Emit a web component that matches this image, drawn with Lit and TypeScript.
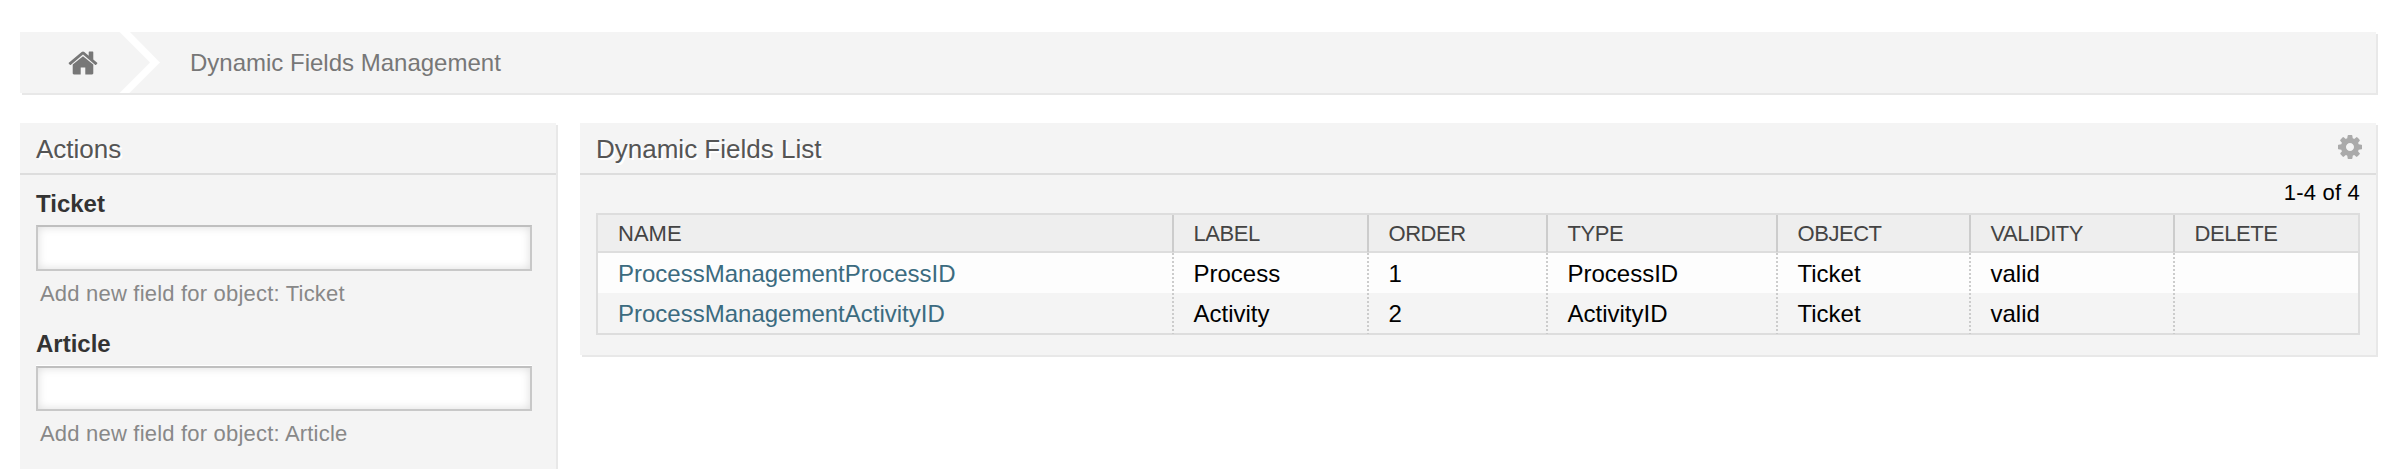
import { LitElement, html, css } from "lit";
import { customElement, property } from "lit/decorators.js";

interface FieldRow {
  name: string;
  label: string;
  order: number;
  type: string;
  object: string;
  validity: string;
}

const COLUMNS = ["Name", "Label", "Order", "Type", "Object", "Validity", "Delete"];

const ROWS: FieldRow[] = [
  { name: "ProcessManagementProcessID", label: "Process", order: 1, type: "ProcessID", object: "Ticket", validity: "valid" },
  { name: "ProcessManagementActivityID", label: "Activity", order: 2, type: "ActivityID", object: "Ticket", validity: "valid" },
];

@customElement("bread-crumb")
class BreadCrumb extends LitElement {
  @property() label = "";

  static styles = css`
    :host {
      display: flex;
      height: 61px;
      background: #f4f4f4;
      box-shadow: 2px 2px 0 #e8e8e8;
    }
    .home {
      box-sizing: border-box;
      width: 99px;
      padding: 15px 0 0 47px;
    }
    .icon {
      display: block;
      width: 32px;
      height: 32px;
      fill: #777;
    }
    .chevron {
      display: block;
      width: 42px;
      height: 61px;
      fill: #fff;
    }
    .label {
      padding-left: 29px;
      font-size: 24px;
      line-height: 61px;
      color: #777;
    }
  `;

  render() {
    return html`
      <div class="home">
        <svg class="icon" viewBox="0 0 1792 1792">
          <path d="M1472 992v480q0 26-19 45t-45 19h-384v-384h-256v384h-384q-26 0-45-19t-19-45v-480q0-1 .5-3t.5-3l575-474 575 474q1 2 1 6zm223-69l-62 74q-8 9-21 11h-3q-13 0-21-7l-692-577-692 577q-12 8-24 7-13-2-21-11l-62-74q-8-10-7-23.500t11-21.500l719-599q32-26 76-26t76 26l244 204v-195q0-14 9-23t23-9h192q14 0 23 9t9 23v408l219 182q10 8 11 21.500t-7 23.500z"/>
        </svg>
      </div>
      <svg class="chevron" viewBox="0 0 42 61">
        <path d="M.5 0h10.500l30 30.500-30.500 30.500H.5l30.500-30.500z"/>
      </svg>
      <div class="label">${this.label}</div>
    `;
  }
}

@customElement("widget-box")
class WidgetBox extends LitElement {
  @property() heading = "";

  static styles = css`
    :host {
      display: block;
      background: #f4f4f4;
      box-shadow: 2px 2px 0 #e8e8e8;
    }
    .header {
      box-sizing: border-box;
      display: flex;
      justify-content: space-between;
      height: 52px;
      padding: 0 12px 0 16px;
      border-bottom: 2px solid #ddd;
    }
    .title {
      margin: 0;
      font-size: 26px;
      font-weight: normal;
      line-height: 52px;
      color: #555;
      text-shadow: 2px 2px 0 #fff;
    }
  `;

  render() {
    return html`
      <div class="header">
        <h2 class="title">${this.heading}</h2>
        <slot name="tool"></slot>
      </div>
      <slot></slot>
    `;
  }
}

@customElement("app-root")
class AppRoot extends LitElement {
  static styles = css`
    :host {
      box-sizing: border-box;
      display: block;
      height: 469px;
      padding: 32px 24px 0 20px;
      overflow: hidden;
      background: #fff;
      font-family: "Liberation Sans", Arial, Helvetica, sans-serif;
      color: #000;
    }
    .columns {
      display: grid;
      grid-template-columns: 536px 1fr;
      gap: 24px;
      align-items: start;
      margin-top: 30px;
    }
    .actions {
      height: 380px;
    }
    .field {
      height: 140px;
      padding: 0 24px 0 16px;
    }
    .caption {
      display: block;
      padding-top: 15px;
      font-size: 24px;
      font-weight: bold;
      line-height: 28px;
      color: #333;
    }
    .input {
      box-sizing: border-box;
      display: block;
      width: 496px;
      height: 46px;
      margin: 7px 0 0;
      padding: 0 8px;
      border: 2px solid #c8c8c8;
      border-top-color: #bfbfbf;
      border-radius: 0;
      outline: none;
      background: #fff;
      box-shadow: inset 0 0 10px #ddd;
      font: inherit;
    }
    .field + .field .input {
      height: 45px;
      margin-top: 8px;
      box-shadow: inset 0 0 10px #ddd, 0 -1px 0 #fff;
    }
    .hint {
      padding: 10px 0 0 4px;
      font-size: 22px;
      letter-spacing: 0.2px;
      line-height: 26px;
      color: #888;
    }
    .gear {
      display: block;
      width: 28px;
      height: 28px;
      margin-top: 10px;
      fill: #aaa;
    }
    .content {
      padding: 0 16px 20px;
    }
    .paging {
      height: 38px;
      font-size: 22px;
      letter-spacing: 0.2px;
      line-height: 35px;
      text-align: right;
    }
    .table {
      box-sizing: border-box;
      width: 100%;
      border: 2px solid #ddd;
    }
    .row {
      display: grid;
      grid-template-columns: 576px 195px 179px 230px 193px 204px 1fr;
      height: 40px;
      background: #fdfdfd;
      font-size: 24px;
      line-height: 41px;
    }
    .row.even {
      background: #f4f4f4;
    }
    .row.head {
      height: 36px;
      border-bottom: 2px solid #ddd;
      background: #eee;
      font-size: 22px;
      letter-spacing: -0.45px;
      line-height: 37px;
      color: #444;
      text-transform: uppercase;
    }
    .cell {
      padding-left: 20px;
      background: repeating-linear-gradient(to bottom, #ccc 0 2px, transparent 2px 4px) right top / 2px 100% no-repeat;
    }
    .cell + .cell {
      padding-left: 19.5px;
    }
    .head .cell {
      background: linear-gradient(#ccc, #ccc) right top / 2px 100% no-repeat;
    }
    .row .cell:last-child {
      background: none;
    }
    .head .cell:first-child {
      letter-spacing: 0;
    }
    .link {
      color: #3b6b80;
      text-decoration: none;
    }
  `;

  private field(name: string) {
    return html`
      <div class="field">
        <label class="caption">${name}</label>
        <input class="input" aria-label=${name} />
        <div class="hint">Add new field for object: ${name}</div>
      </div>
    `;
  }

  private row(r: FieldRow, i: number) {
    return html`
      <div class="row ${i % 2 ? "even" : ""}">
        <div class="cell"><a class="link" href="#">${r.name}</a></div>
        <div class="cell">${r.label}</div>
        <div class="cell">${r.order}</div>
        <div class="cell">${r.type}</div>
        <div class="cell">${r.object}</div>
        <div class="cell">${r.validity}</div>
        <div class="cell"></div>
      </div>
    `;
  }

  render() {
    return html`
      <bread-crumb label="Dynamic Fields Management"></bread-crumb>
      <div class="columns">
        <widget-box class="actions" heading="Actions">
          ${["Ticket", "Article"].map((n) => this.field(n))}
        </widget-box>
        <widget-box heading="Dynamic Fields List">
          <svg slot="tool" class="gear" viewBox="0 0 1792 1792">
            <path d="M1152 896q0-106-75-181t-181-75-181 75-75 181 75 181 181 75 181-75 75-181zm512-109v222q0 12-8 23t-20 13l-185 28q-19 54-39 91 35 50 107 138 10 12 10 25t-9 23q-27 37-99 108t-94 71q-12 0-26-9l-138-108q-44 23-91 38-16 136-29 186-7 28-36 28h-222q-14 0-24.500-8.500t-11.500-21.500l-28-184q-49-16-90-37l-141 107q-10 9-25 9-14 0-25-11-126-114-165-168-7-10-7-23 0-12 8-23 15-21 51-66.500t54-70.500q-27-50-41-99l-183-27q-13-2-21-12.500t-8-23.500v-222q0-12 8-23t19-13l186-28q14-46 39-92-40-57-107-138-10-12-10-24 0-10 9-23 26-36 98.500-107.500t94.500-71.500q13 0 26 10l138 107q44-23 91-38 16-136 29-186 7-28 36-28h222q14 0 24.500 8.500t11.500 21.500l28 184q49 16 90 37l142-107q9-9 24-9 13 0 25 10 129 119 165 170 7 8 7 22 0 12-8 23-15 21-51 66.500t-54 70.500q26 50 41 98l183 28q13 2 21 12.500t8 23.500z"/>
          </svg>
          <div class="content">
            <div class="paging">1-4 of 4</div>
            <div class="table">
              <div class="row head">${COLUMNS.map((c) => html`<div class="cell">${c}</div>`)}</div>
              ${ROWS.map((r, i) => this.row(r, i))}
            </div>
          </div>
        </widget-box>
      </div>
    `;
  }
}
